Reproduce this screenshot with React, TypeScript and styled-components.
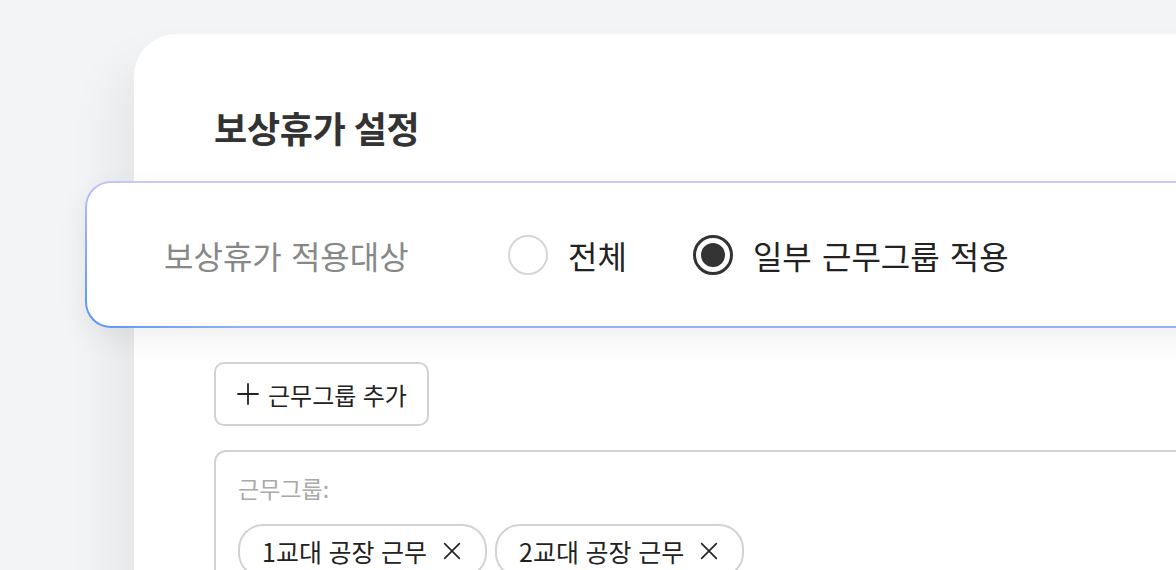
import React from 'react'
import styled, { createGlobalStyle } from 'styled-components'

const GlobalStyle = createGlobalStyle`
  html, body {
    margin: 0;
    padding: 0;
    overflow: hidden;
    background: #f3f4f6;
  }
  body {
    font-family: 'Noto Sans CJK KR', 'Noto Sans', sans-serif;
    color: #222;
  }
`

const Page = styled.div`
  width: 1176px;
  height: 570px;
  padding: 34px 0 0 134px;
  box-sizing: border-box;
  overflow: hidden;
`

const Card = styled.div`
  width: 1200px;
  min-height: 700px;
  background: #fff;
  border-radius: 42px 0 0 0;
  box-shadow: -20px 30px 50px rgba(0, 0, 0, 0.06);
  padding: 67px 0 0 80px;
  box-sizing: border-box;
`

const Title = styled.h1`
  margin: 0;
  font-size: 36px;
  font-weight: 700;
  line-height: 52px;
  letter-spacing: -0.2px;
  color: #333;
`

const RowFrame = styled.div`
  margin: 28px 0 0 -129px;
  padding: 2px;
  border-radius: 26px;
  background:
    radial-gradient(circle at 0% 100%, #5b94f9 0, rgba(91, 148, 249, 0) 160px),
    linear-gradient(to bottom, #ccc7fc 0%, #bcbdfb 50%, #94b1f8 100%);
  box-shadow: 0 10px 30px rgba(0, 0, 0, 0.07);
`

const Row = styled.div`
  height: 143px;
  border-radius: 24px;
  background: #fff;
  display: flex;
  align-items: center;
  padding-left: 77px;
`

const RowLabel = styled.div`
  width: 344px;
  font-size: 32px;
  word-spacing: 2px;
  color: #888;
`

const Options = styled.div`
  display: flex;
  align-items: center;
  gap: 66px;
`

const Option = styled.label`
  display: flex;
  align-items: center;
  gap: 20px;
  font-size: 32px;
  word-spacing: 3px;
  color: #222;
`

const RadioMark = styled.span<{ $checked?: boolean }>`
  width: 40px;
  height: 40px;
  box-sizing: border-box;
  border-radius: 50%;
  border: ${(p) => (p.$checked ? '3px solid #333' : '2px solid #d6d6d6')};
  display: flex;
  align-items: center;
  justify-content: center;

  &::after {
    content: '';
    display: ${(p) => (p.$checked ? 'block' : 'none')};
    width: 24px;
    height: 24px;
    border-radius: 50%;
    background: #333;
  }
`

const AddButton = styled.button`
  margin-top: 34px;
  height: 64px;
  padding: 0 20px;
  border: 2px solid #d2d2d2;
  border-radius: 10px;
  background: #fff;
  font-family: inherit;
  font-size: 24px;
  word-spacing: 1px;
  color: #222;
  display: flex;
  align-items: center;
  gap: 8px;
`

const GroupBox = styled.div`
  margin-top: 24px;
  border: 2px solid #d2d2d2;
  border-radius: 12px;
  padding: 20px 22px;
  min-height: 200px;
`

const GroupLabel = styled.div`
  font-size: 23px;
  color: #aaa;
  line-height: 32px;
`

const Chips = styled.div`
  margin-top: 20px;
  display: flex;
  gap: 8px;
`

const Chip = styled.div`
  height: 50px;
  padding: 0 22px;
  border: 2px solid #d2d2d2;
  border-radius: 25px;
  display: flex;
  align-items: center;
  gap: 14px;
  font-size: 25px;
  word-spacing: 1px;
  color: #222;
`

const Icon = ({ size, path }: { size: number; path: string }) => (
  <svg width={size} height={size} viewBox="0 0 24 24" fill="none" stroke="#222" strokeWidth={1.8} strokeLinecap="round">
    <path d={path} />
  </svg>
)

const groups = ['1교대 공장 근무', '2교대 공장 근무']

export default function App() {
  return (
    <>
      <GlobalStyle />
      <Page>
        <Card>
          <Title>보상휴가 설정</Title>
          <RowFrame>
            <Row>
              <RowLabel>보상휴가 적용대상</RowLabel>
              <Options>
                <Option>
                  <RadioMark />
                  전체
                </Option>
                <Option>
                  <RadioMark $checked />
                  일부 근무그룹 적용
                </Option>
              </Options>
            </Row>
          </RowFrame>
          <AddButton>
            <Icon size={24} path="M12 2v20M2 12h20" />
            근무그룹 추가
          </AddButton>
          <GroupBox>
            <GroupLabel>근무그룹:</GroupLabel>
            <Chips>
              {groups.map((g) => (
                <Chip key={g}>
                  {g}
                  <Icon size={22} path="M4 4l16 16M20 4L4 20" />
                </Chip>
              ))}
            </Chips>
          </GroupBox>
        </Card>
      </Page>
    </>
  )
}
